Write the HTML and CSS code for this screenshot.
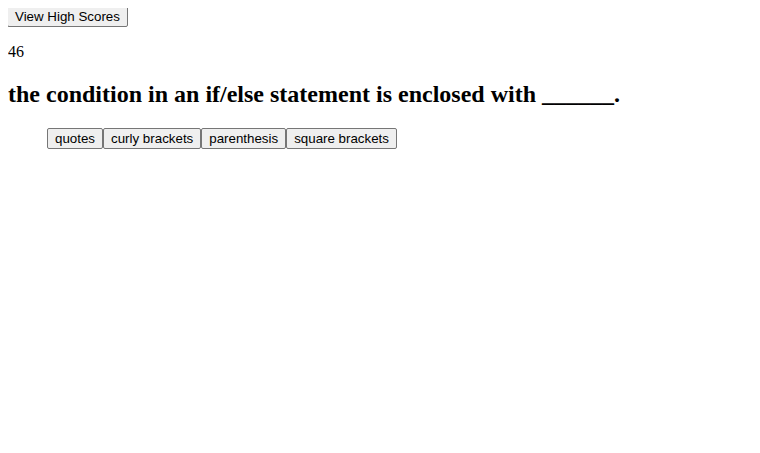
FILE: index.html
```html
<!DOCTYPE html>
<html>
<head>
<meta charset="utf-8">
<link rel="stylesheet" href="styles.css">
</head>
<body class="page">
<button class="btn btn-top">View High Scores</button>
<p class="timer">46</p>
<h2 class="question">the condition in an if/else statement is enclosed with ______.</h2>
<div class="choices"><button class="btn">quotes</button><button class="btn">curly brackets</button><button class="btn">parenthesis</button><button class="btn">square brackets</button></div>
</body>
</html>
```
FILE: styles.css
```css
html, body {
  background: #fff;
}
.page {
  margin: 8px;
  font-family: "Liberation Serif", "Times New Roman", serif;
  font-size: 16px;
  color: #000;
}
.btn {
  font-family: "Liberation Sans", Arial, sans-serif;
  font-size: 13.333px;
  color: #000;
  background: #efefef;
  border: 1px solid #767676;
  border-radius: 2px;
  padding: 2px 7px;
  margin: 0;
  line-height: normal;
}
.btn-top {
  display: block;
  margin: -2px 0 0 -1px;
}
.timer {
  margin: 16px 0;
}
.question {
  font-size: 24px;
  font-weight: bold;
  margin: 19.92px 0;
}
.choices {
  padding-left: 39px;
  margin: 16px 0;
  display: flex;
}
```
